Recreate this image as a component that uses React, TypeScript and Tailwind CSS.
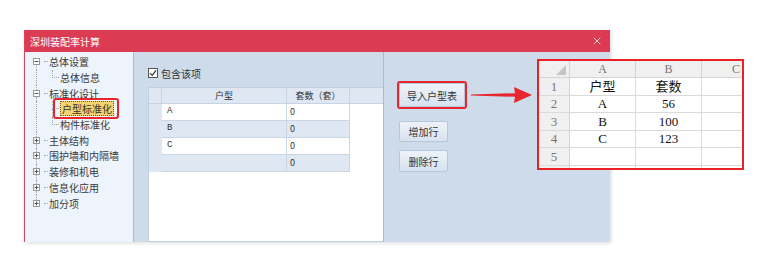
import { X } from 'lucide-react';

type TreeRow = {
  label: string;
  level: 0 | 1;
  expanded?: boolean;
  lastChild?: boolean;
  selected?: boolean;
  first?: boolean;
  last?: boolean;
};

const tree: TreeRow[] = [
  { label: '总体设置', level: 0, expanded: true, first: true },
  { label: '总体信息', level: 1, lastChild: true },
  { label: '标准化设计', level: 0, expanded: true },
  { label: '户型标准化', level: 1, selected: true },
  { label: '构件标准化', level: 1, lastChild: true },
  { label: '主体结构', level: 0 },
  { label: '围护墙和内隔墙', level: 0 },
  { label: '装修和机电', level: 0 },
  { label: '信息化应用', level: 0 },
  { label: '加分项', level: 0, last: true },
];

const rows = [
  { name: 'A', count: '0' },
  { name: 'B', count: '0' },
  { name: 'C', count: '0' },
  { name: '', count: '0' },
];

const sheet = [
  ['户型', '套数'],
  ['A', '56'],
  ['B', '100'],
  ['C', '123'],
  ['', ''],
];

function ExpandBox({ open }: { open: boolean }) {
  return (
    <div className="flex h-[7px] w-[7px] items-center justify-center border border-[#9a9a9a] bg-white">
      <svg width="5" height="5" viewBox="0 0 5 5">
        <line x1="0.5" y1="2.5" x2="4.5" y2="2.5" stroke="#555" strokeWidth="1" />
        {!open && <line x1="2.5" y1="0.5" x2="2.5" y2="4.5" stroke="#555" strokeWidth="1" />}
      </svg>
    </div>
  );
}

function TreeItem({ row }: { row: TreeRow }) {
  return (
    <div className="relative flex h-[15.7px] items-stretch">
      {/* top level guide line */}
      <div className="flex w-4 flex-col items-center">
        {row.level === 0 ? (
          <>
            <div className={`w-0 flex-1 ${row.first ? '' : 'border-l border-dotted border-[#a5a5a5]'}`} />
            <ExpandBox open={!!row.expanded} />
            <div className={`w-0 flex-1 ${row.last ? '' : 'border-l border-dotted border-[#a5a5a5]'}`} />
          </>
        ) : (
          <div className="w-0 flex-1 border-l border-dotted border-[#a5a5a5]" />
        )}
      </div>
      {row.level === 0 ? (
        <div className="flex items-center">
          <div className="w-[4px] border-t border-dotted border-[#a5a5a5]" />
        </div>
      ) : (
        <div className="flex w-[15px]">
          <div className="w-[8px]" />
          <div className="flex w-[7px] flex-col">
            <div className="flex-1 border-b border-l border-dotted border-[#a5a5a5]" />
            <div className={`flex-1 ${row.lastChild ? '' : 'border-l border-dotted border-[#a5a5a5]'}`} />
          </div>
        </div>
      )}
      <div className="flex items-center pl-[1px]">
        {row.selected ? (
          <span className="border border-dotted border-[#6b5a2a] bg-[#f4d470] px-[1px] text-[10px] leading-[13px] text-[#333]">
            {row.label}
          </span>
        ) : (
          <span className="text-[10px] leading-[13px] text-[#3a3a3a]">{row.label}</span>
        )}
      </div>
      {row.selected && (
        <div className="pointer-events-none absolute left-[25px] top-[-3px] h-[21px] w-[66px] rounded-[3px] border-2 border-[#e8262e]" />
      )}
    </div>
  );
}

function Btn({ label, w, h }: { label: string; w: string; h: string }) {
  return (
    <div
      className={`${w} ${h} flex items-center justify-center rounded-[2px] border border-[#b7c6d9] bg-gradient-to-b from-[#eef3f9] to-[#d7e2ef] text-[10px] text-[#333]`}
    >
      {label}
    </div>
  );
}

export default function App() {
  return (
    <div className="relative h-[256px] w-[760px] overflow-hidden bg-white pl-[24px] pt-[30px] font-['Noto_Sans_CJK_SC',sans-serif]">
      {/* dialog */}
      <div className="flex h-[212px] w-[586px] flex-col border-l border-[#d8485d] bg-[#cedbeb] shadow-[1px_1px_4px_rgba(0,0,0,0.15)]">
        <div className="flex h-[22px] items-center justify-between bg-[#dc3c53] pl-[5px] pr-[7px]">
          <span className="text-[10px] text-white">深圳装配率计算</span>
          <X size={12} strokeWidth={1.5} className="text-white" />
        </div>

        <div className="flex min-h-0 flex-1">
          {/* tree */}
          <div className="w-[109px] border-r border-[#a9bbd3] bg-[#eef4fb] pl-[3px] pt-[2px]">
            {tree.map((r) => (
              <TreeItem key={r.label} row={r} />
            ))}
          </div>

          {/* table side */}
          <div className="ml-[14px] flex w-[235px] flex-col">
            <div className="mb-[8px] mt-[15px] flex h-[12px] items-center gap-[3px]">
              <div className="flex h-[10px] w-[10px] items-center justify-center border border-[#555] bg-white">
                <svg width="8" height="8" viewBox="0 0 8 8">
                  <path d="M1 4.2 L3.2 6.4 L7 1.4" fill="none" stroke="#333" strokeWidth="1.2" />
                </svg>
              </div>
              <span className="text-[10px] text-[#333]">包含该项</span>
            </div>
            <div className="flex-1 border border-r-0 border-[#c2cfe1] bg-white">
              <div className="flex h-[16px] border-b border-[#c6d3e4] bg-[#dee7f2] text-[9px] text-[#333]">
                <div className="w-[13px] border-r border-[#c6d3e4]" />
                <div className="flex w-[125px] items-center justify-center border-r border-[#c6d3e4]">户型</div>
                <div className="flex w-[63px] items-center justify-center border-r border-[#c6d3e4]">套数（套）</div>
                <div className="flex-1" />
              </div>
              {rows.map((r, i) => (
                <div key={i} className="flex h-[17px] text-[9px] text-[#333]">
                  <div className="w-[13px] bg-[#dde6f1]" />
                  <div
                    className={`flex w-[125px] items-center border-b border-r border-[#c9d5e5] pl-[5px] font-['Liberation_Mono',monospace] ${
                      i % 2 ? 'bg-[#dfe7f2]' : 'bg-white'
                    }`}
                  >
                    {r.name}
                  </div>
                  <div
                    className={`flex w-[63px] items-center border-b border-r border-[#c9d5e5] pl-[3px] ${
                      i % 2 ? 'bg-[#dfe7f2]' : 'bg-white'
                    }`}
                  >
                    {r.count}
                  </div>
                </div>
              ))}
            </div>
          </div>

          {/* buttons */}
          <div className="flex-1 border-l border-[#abbacd] pl-[13px] pt-[29px]">
            <div className="flex items-center">
              <div className="rounded-[3px] border-2 border-[#e8262e]">
                <Btn label="导入户型表" w="w-[66px]" h="h-[24px]" />
              </div>
              <svg width="62" height="20" viewBox="0 0 62 20" className="ml-[4px]">
                <polygon points="0,9.6 44,8.2 43,2 61,10 43,18 44,11.8 0,10.4" fill="#e8262e" />
              </svg>
            </div>
            <div className="ml-[2px] mt-[12px]">
              <Btn label="增加行" w="w-[49px]" h="h-[21px]" />
            </div>
            <div className="ml-[2px] mt-[8px]">
              <Btn label="删除行" w="w-[49px]" h="h-[22px]" />
            </div>
          </div>
        </div>
      </div>

      {/* excel snippet overlaid on dialog */}
      <div className="absolute left-[537px] top-[59px] h-[111px] w-[207px] overflow-hidden border-2 border-[#ea2127] bg-white font-['Liberation_Serif','Noto_Sans_CJK_SC',serif]">
        <div className="flex h-[17px] border-b border-[#d4d4d4] bg-[#f0f0f0] text-[12px] text-[#777]">
          <div className="relative w-[31px] border-r border-[#d4d4d4]">
            <svg width="10" height="10" viewBox="0 0 10 10" className="absolute bottom-[2px] right-[3px]">
              <polygon points="10,0 10,10 0,10" fill="#c4c4c4" />
            </svg>
          </div>
          <div className="flex w-[66px] items-center justify-center border-r border-[#d4d4d4]">A</div>
          <div className="flex w-[66px] items-center justify-center border-r border-[#d4d4d4]">B</div>
          <div className="flex flex-1 items-center justify-end pr-[2px]">C</div>
        </div>
        {sheet.map((r, i) => (
          <div key={i} className="flex h-[17.5px] border-b border-[#dadada]">
            <div className="flex w-[31px] items-center justify-center border-r border-[#d4d4d4] bg-[#f0f0f0] text-[13px] text-[#777]">
              {i + 1}
            </div>
            <div className="flex w-[66px] items-center justify-center border-r border-[#dadada] text-[13px] text-[#111]">
              {r[0]}
            </div>
            <div className="flex w-[66px] items-center justify-center border-r border-[#dadada] text-[13px] text-[#111]">
              {r[1]}
            </div>
            <div className="flex-1" />
          </div>
        ))}
        {/* partly visible next row */}
        <div className="flex h-[4px]">
          <div className="w-[31px] border-r border-[#d4d4d4] bg-[#f0f0f0]" />
          <div className="w-[66px] border-r border-[#dadada]" />
          <div className="w-[66px] border-r border-[#dadada]" />
        </div>
      </div>
    </div>
  );
}
